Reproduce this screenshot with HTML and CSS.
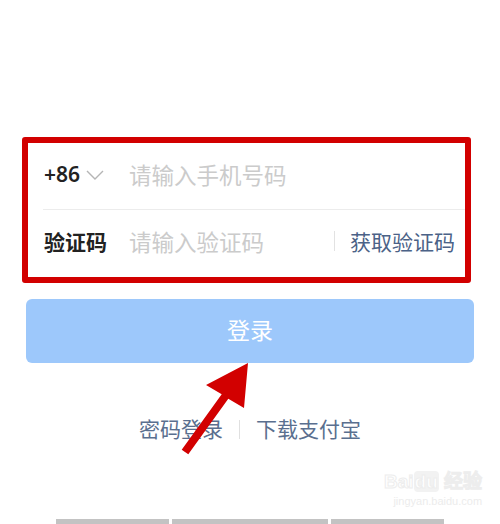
FILE: index.html
```html
<!DOCTYPE html>
<html lang="zh-CN">
<head>
    <meta charset="UTF-8">
    <meta name="viewport" content="width=device-width, initial-scale=1.0">
    <title>登录</title>
    <link rel="stylesheet" href="styles.css">
</head>
<body>
    <div class="page">
        <div class="login-form">
            <div class="form-row">
                <div class="form-label country">+86
                    <svg class="chevron" width="18" height="10" viewBox="0 0 18 10">
                        <polyline points="1,1 9,9 17,1" fill="none" stroke="#b5b5b5" stroke-width="1.4"/>
                    </svg>
                </div>
                <input class="form-input" type="text" placeholder="请输入手机号码">
            </div>
            <div class="form-row">
                <div class="form-label">验证码</div>
                <input class="form-input" type="text" placeholder="请输入验证码">
                <span class="get-code">获取验证码</span>
            </div>
        </div>

        <button class="login-button">登录</button>

        <div class="links">
            <span class="link">密码登录</span>
            <span class="link-sep"></span>
            <span class="link">下载支付宝</span>
        </div>

        <div class="footer-bars">
            <span class="bar bar-a"></span>
            <span class="bar bar-b"></span>
            <span class="bar bar-c"></span>
        </div>
    </div>

    <!-- annotation arrow drawn over the page -->
    <svg class="arrow" width="90" height="110" viewBox="170 355 90 110">
        <polygon fill="#d20000" points="248,363 244,408 228.3,398.8 188.3,454.3 181.7,449.7 221.7,394.2 206,385"/>
    </svg>

    <div class="watermark">
        <div class="wm-logo">Bai<span class="wm-du">du</span> 经验</div>
        <div class="wm-url">jingyan.baidu.com</div>
    </div>
</body>
</html>
```

FILE: styles.css
```css
body {
    margin: 0;
    background-color: #fff;
    font-family: "Noto Sans CJK SC", "Noto Sans", sans-serif;
    position: relative;
    width: 500px;
    height: 524px;
    overflow: hidden;
}
.page {
    display: flex;
    flex-direction: column;
    height: 524px;
    padding-top: 137px;
    box-sizing: border-box;
}
.login-form {
    margin-left: 22px;
    width: 449px;
    height: 146px;
    box-sizing: border-box;
    border: 6px solid #d20000;
    border-radius: 3px;
    padding-left: 15px;
}
.form-row {
    display: flex;
    align-items: center;
    height: 66px;
    box-sizing: border-box;
    padding: 0 0 5px 1px;
}
.form-row + .form-row {
    border-top: 1px solid #ececec;
    height: 67px;
}
.form-label {
    width: 85px;
    flex-shrink: 0;
    font-size: 21px;
    font-weight: 700;
    color: #222;
    display: flex;
    align-items: center;
}
.country {
    font-family: "Noto Sans", sans-serif;
    font-weight: 600;
    font-size: 21px;
}
.chevron {
    margin-left: 6px;
    margin-top: 2px;
}
.form-input {
    flex: 1;
    min-width: 0;
    border: none;
    outline: none;
    padding: 0;
    font-family: "Noto Sans CJK SC", sans-serif;
    font-size: 22.5px;
    color: #333;
    background: transparent;
}
.form-input::placeholder {
    color: #cbcbcb;
}
.get-code {
    border-left: 1px solid #e2e2e2;
    padding: 0 10px 0 15px;
    font-size: 21px;
    line-height: 20px;
    color: #4b6287;
    white-space: nowrap;
}
.login-button {
    margin: 16px 0 0 26px;
    width: 448px;
    height: 64px;
    border: none;
    border-radius: 6px;
    background-color: #9dc8fb;
    color: #fff;
    font-family: "Noto Sans CJK SC", sans-serif;
    font-size: 23px;
    padding: 0 0 4px;
}
.links {
    margin-top: 50px;
    display: flex;
    justify-content: center;
    align-items: center;
    height: 30px;
}
.link {
    font-size: 21px;
    color: #5a6f8f;
}
.link-sep {
    width: 1px;
    height: 19px;
    background-color: #e0e0e0;
    margin: 2px 16px 0;
}
.footer-bars {
    margin-top: auto;
    display: flex;
    gap: 3px;
    padding-left: 56px;
    height: 5px;
}
.bar {
    background-color: #c3c3c3;
    height: 5px;
}
.bar-a { width: 113px; }
.bar-b { width: 156px; }
.bar-c { width: 113px; }
.arrow {
    position: absolute;
    left: 170px;
    top: 355px;
}
.watermark {
    position: absolute;
    left: 384px;
    top: 470px;
    color: #fff;
    text-align: right;
}
.wm-logo {
    font-family: "Liberation Sans", sans-serif;
    font-size: 19px;
    font-weight: 700;
    -webkit-text-stroke: 1px #ededed;
    line-height: 24px;
}
.wm-du {
    background-color: #f2f2f2;
    border-radius: 4px;
    padding: 0 1px;
}
.wm-url {
    font-family: "Liberation Sans", sans-serif;
    font-size: 11px;
    color: #ececec;
    line-height: 14px;
}
```
